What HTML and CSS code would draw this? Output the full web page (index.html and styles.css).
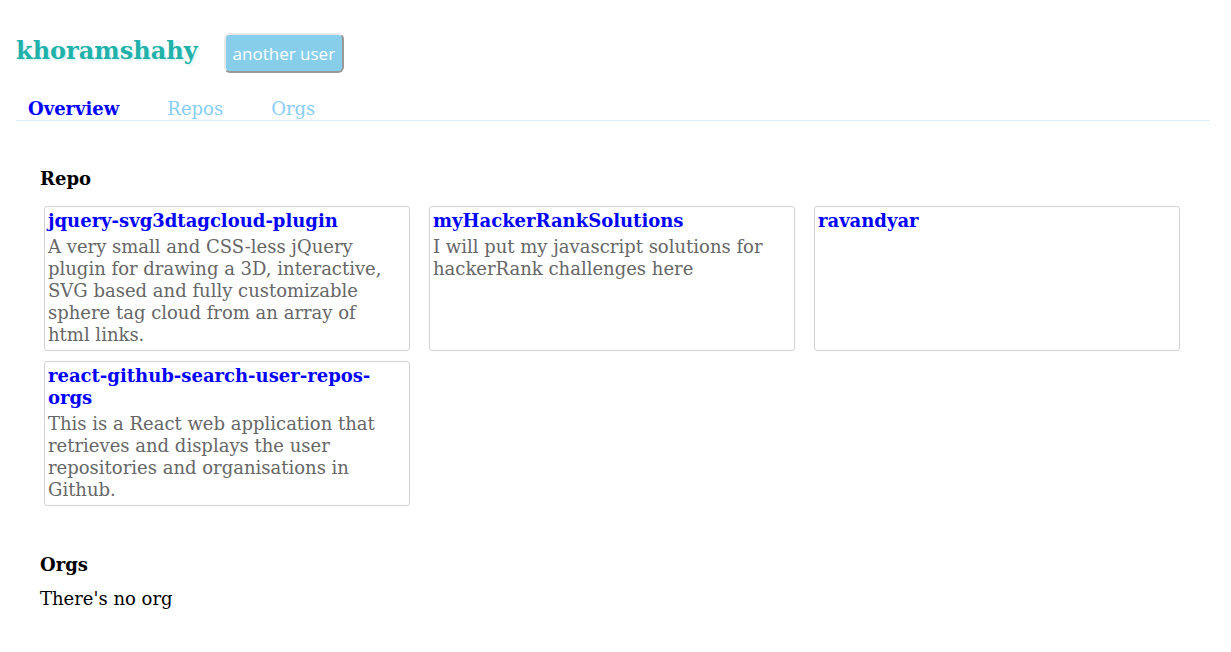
FILE: index.html
```html
<!DOCTYPE html>
<html>
<head>
<meta charset="utf-8">
<link rel="stylesheet" href="styles.css">
</head>
<body>
<div class="app">
  <header class="top">
    <h1 class="user">khoramshahy</h1>
    <button class="switch">another user</button>
  </header>
  <nav class="tabs">
    <a class="tab active">Overview</a>
    <a class="tab">Repos</a>
    <a class="tab">Orgs</a>
  </nav>
  <main class="content">
    <section class="block">
      <h2 class="heading">Repo</h2>
      <div class="grid">
        <div class="card">
          <div class="name">jquery-svg3dtagcloud-plugin</div>
          <div class="desc">A very small and CSS-less jQuery plugin for drawing a 3D, interactive, SVG based and fully customizable sphere tag cloud from an array of html links.</div>
        </div>
        <div class="card">
          <div class="name">myHackerRankSolutions</div>
          <div class="desc">I will put my javascript solutions for hackerRank challenges here</div>
        </div>
        <div class="card">
          <div class="name">ravandyar</div>
        </div>
        <div class="card">
          <div class="name">react-github-search-user-repos-orgs</div>
          <div class="desc">This is a React web application that retrieves and displays the user repositories and organisations in Github.</div>
        </div>
      </div>
    </section>
    <section class="block orgs">
      <h2 class="heading">Orgs</h2>
      <p class="empty">There's no org</p>
    </section>
  </main>
</div>
</body>
</html>
```
FILE: styles.css
```css
html, body {
  margin: 0;
  padding: 0;
  background: #fff;
}
body {
  font-family: "DejaVu Serif", serif;
  color: #000;
}
.app {
  padding: 0 21px 0 16px;
}
.top {
  display: flex;
  align-items: flex-start;
  padding-top: 33px;
  box-sizing: border-box;
  height: 92px;
}
.user {
  margin: 0 26px 0 0;
  font-size: 24px;
  line-height: 36px;
  color: #20b2aa;
  text-shadow: 2px 2px 1px #e0f4f3;
}
.switch {
  font-family: "Open Sans", sans-serif;
  font-size: 17px;
  color: #fff;
  background: #87ceeb;
  border: 2px solid #9a9a9a;
  border-top-color: #e8e8e8;
  border-left-color: #e8e8e8;
  border-radius: 6px;
  height: 40px;
  padding: 0 7px;
  margin: 0;
}
.tabs {
  display: flex;
  gap: 48px;
  padding: 5px 0 0 12px;
  border-bottom: 1px solid #ddf0fa;
}
.tab {
  font-size: 18px;
  line-height: 23px;
  color: #87cefa;
}
.tab.active {
  color: #0000ff;
  font-weight: bold;
}
.content {
  padding: 47px 13px 0 24px;
}
.heading {
  font-size: 18px;
  font-weight: bold;
  margin: 0 0 16px;
  line-height: 22px;
}
.grid {
  display: grid;
  grid-template-columns: repeat(3, 366px);
  column-gap: 19px;
  row-gap: 10px;
  margin-left: 4px;
}
.card {
  height: 145px;
  box-sizing: border-box;
  border: 1px solid #d3d3d3;
  border-radius: 3px;
  padding: 3px 6px 2px 3px;
}
.name {
  font-size: 18px;
  font-weight: bold;
  color: #0000ff;
  line-height: 22px;
}
.desc {
  font-size: 18px;
  line-height: 22px;
  color: #666;
  margin-top: 4px;
}
.orgs {
  margin-top: 48px;
}
.orgs .heading {
  margin-bottom: 12px;
}
.empty {
  margin: 0;
  font-size: 18px;
  line-height: 22px;
}
```
